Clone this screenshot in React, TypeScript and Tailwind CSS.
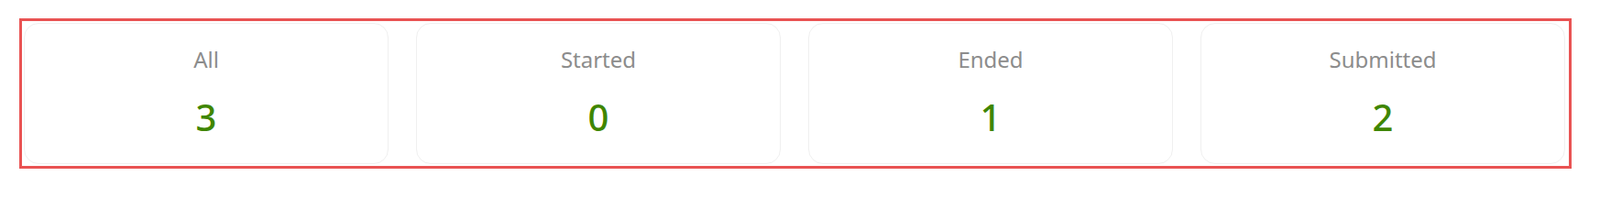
const stats = [
  { title: "All", value: 3 },
  { title: "Started", value: 0 },
  { title: "Ended", value: 1 },
  { title: "Submitted", value: 2 },
]

function StatCard({ title, value }: { title: string; value: number }) {
  return (
    <div className="flex h-[154px] flex-col items-center rounded-[16px] border border-[#f0f0f0] bg-white pt-[24px]">
      <div className="text-[24px] leading-[30px] text-[#8c8c8c]">{title}</div>
      <div className="mt-[24px] text-[40px] font-medium leading-[48px] text-[#3f8600]">{value}</div>
    </div>
  )
}

export default function App() {
  return (
    <div className="min-h-[209px] bg-white pl-[21px] pr-[31px] pt-[20px] font-['Noto_Sans',sans-serif]">
      <div className="border-[3px] border-[#e95353] pb-[2px] pl-[2px] pr-[4px] pt-[2px]">
        <div className="grid grid-cols-4 gap-[30px]">
          {stats.map(s => (
            <StatCard key={s.title} title={s.title} value={s.value} />
          ))}
        </div>
      </div>
    </div>
  )
}
